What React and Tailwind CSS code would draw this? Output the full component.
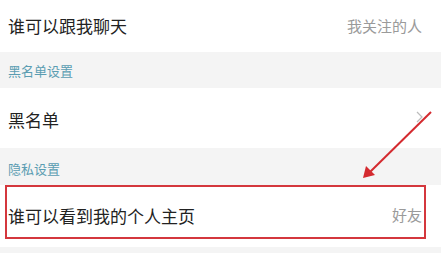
import React from 'react'

const font = { fontFamily: "'Noto Sans CJK SC', 'Noto Sans', sans-serif" }

function Section({ title, className = '' }) {
  return (
    <div className={`bg-[#f4f4f4] flex items-center pl-2 text-[13px] text-[#5b9db2] ${className}`}>
      {title}
    </div>
  )
}

export default function App() {
  return (
    <div className="relative w-[441px] h-[253px] overflow-hidden bg-[#f4f4f4]" style={font}>
      {/* 聊天 */}
      <div className="h-[52px] bg-white flex items-center justify-between pl-2 pr-[19px]">
        <span className="text-[17px] text-[#222]">谁可以跟我聊天</span>
        <span className="text-[15px] text-[#9a9a9a]">我关注的人</span>
      </div>

      <Section title="黑名单设置" className="h-[36px] pt-[2px]" />

      {/* 黑名单 */}
      <div className="h-[60px] bg-white flex items-center justify-between pl-2 pr-[18px] pt-[3px]">
        <span className="text-[17px] text-[#222]">黑名单</span>
        <svg width="7" height="12" viewBox="0 0 7 12" className="-mt-[6px]">
          <path d="M1 1l5 5-5 5" fill="none" stroke="#bbb" strokeWidth="1.2" />
        </svg>
      </div>

      <Section title="隐私设置" className="h-[37px] pt-[4px]" />

      {/* 个人主页 */}
      <div className="h-[62px] bg-white pl-[5px] pr-[15px]">
        <div className="h-[54px] border-2 border-[#d4373d] flex items-center justify-between pl-[1px] pr-[2px] pt-[7px]">
          <span className="text-[17px] text-[#222]">谁可以看到我的个人主页</span>
          <span className="text-[15px] text-[#9a9a9a]">好友</span>
        </div>
      </div>

      {/* annotation arrow */}
      <svg className="absolute left-0 top-0 pointer-events-none" width="441" height="253">
        <line x1="431" y1="112" x2="370" y2="172" stroke="#d42a2f" strokeWidth="2" />
        <polygon points="363,178 366,166 375,175" fill="#d42a2f" />
      </svg>
    </div>
  )
}
